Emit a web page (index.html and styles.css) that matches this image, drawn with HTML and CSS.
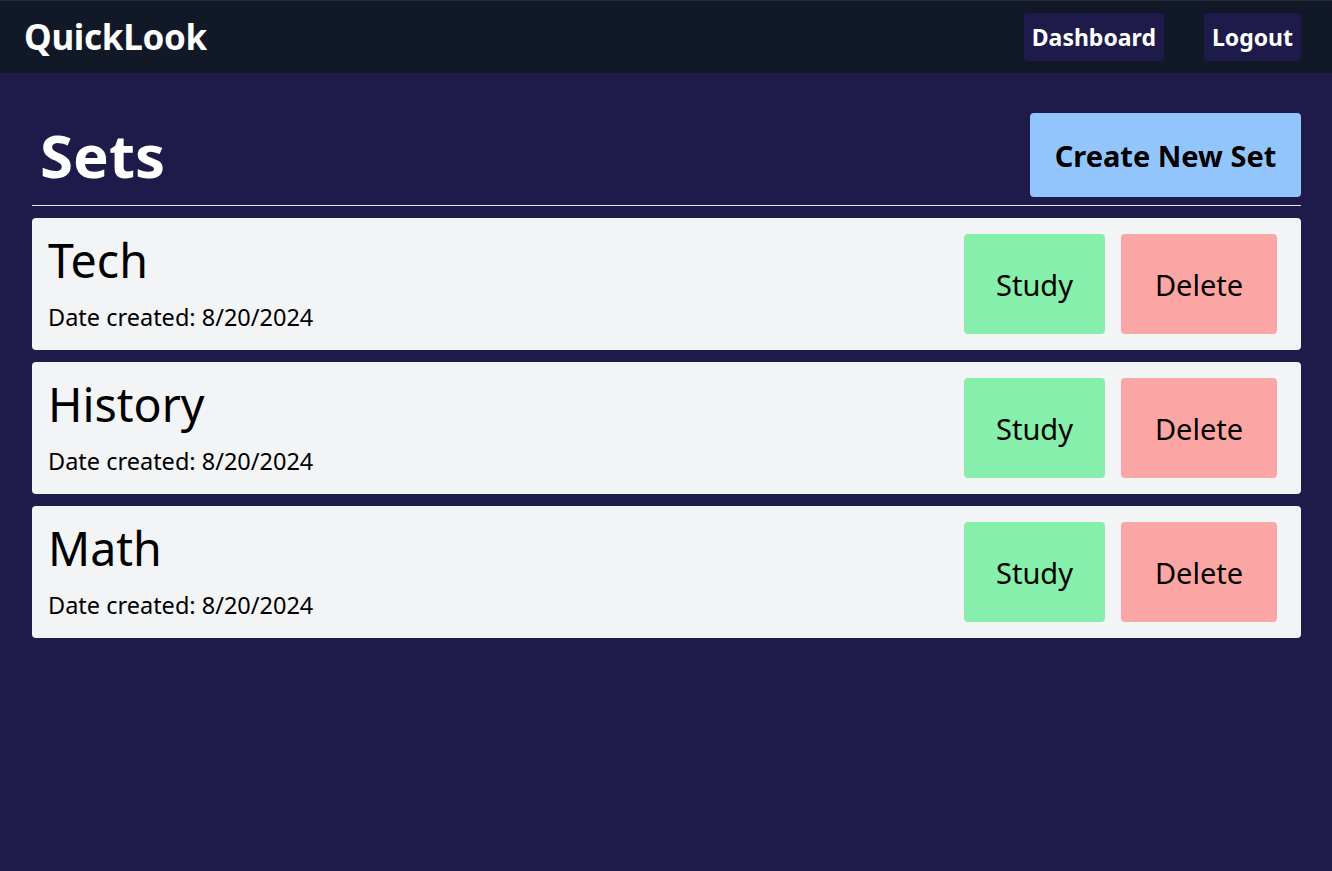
FILE: index.html
```html
<!DOCTYPE html>
<html lang="en">
<head>
<meta charset="utf-8">
<title>QuickLook</title>
<link rel="stylesheet" href="styles.css">
</head>
<body>
<nav class="navbar">
  <a class="logo" href="#">QuickLook</a>
  <div class="nav-links">
    <a class="nav-btn" href="#">Dashboard</a>
    <a class="nav-btn" href="#">Logout</a>
  </div>
</nav>
<main class="main">
  <header class="page-header">
    <h1 class="page-title">Sets</h1>
    <button class="create-btn">Create New Set</button>
  </header>
  <ul class="set-list">
    <li class="set-card">
      <div class="set-info">
        <h2 class="set-name">Tech</h2>
        <p class="set-date">Date created: 8/20/2024</p>
      </div>
      <div class="set-actions">
        <button class="btn btn-study">Study</button>
        <button class="btn btn-delete">Delete</button>
      </div>
    </li>
    <li class="set-card">
      <div class="set-info">
        <h2 class="set-name">History</h2>
        <p class="set-date">Date created: 8/20/2024</p>
      </div>
      <div class="set-actions">
        <button class="btn btn-study">Study</button>
        <button class="btn btn-delete">Delete</button>
      </div>
    </li>
    <li class="set-card">
      <div class="set-info">
        <h2 class="set-name">Math</h2>
        <p class="set-date">Date created: 8/20/2024</p>
      </div>
      <div class="set-actions">
        <button class="btn btn-study">Study</button>
        <button class="btn btn-delete">Delete</button>
      </div>
    </li>
  </ul>
</main>
</body>
</html>
```

FILE: styles.css
```css
* { box-sizing: border-box; }

html, body {
  margin: 0;
  padding: 0;
}

body {
  background: #1e1b4b;
  min-height: 100vh;
  font-family: "Noto Sans", "Open Sans", sans-serif;
  color: #000;
}

a { text-decoration: none; }

.navbar {
  display: flex;
  justify-content: space-between;
  align-items: center;
  height: 73px;
  border-top: 1px solid #2a2a2e;
  background: #111827;
  padding: 0 31px 0 24px;
}

.logo {
  color: #fff;
  font-weight: 700;
  font-size: 35px;
  line-height: 40px;
  letter-spacing: -0.3px;
}

.nav-links {
  display: flex;
  gap: 40px;
}

.nav-btn {
  display: flex;
  align-items: center;
  justify-content: center;
  height: 48px;
  padding: 0 8px;
  border-radius: 4px;
  background: #1e1b4b;
  color: #fff;
  font-weight: 700;
  font-size: 23px;
}

.main {
  margin: 40px 31px 0 32px;
}

.page-header {
  display: flex;
  justify-content: space-between;
  align-items: center;
  padding: 0 0 8px 8px;
  border-bottom: 1px solid #e5e7eb;
}

.page-title {
  margin: 0;
  color: #fff;
  font-size: 60px;
  line-height: 60px;
  font-weight: 700;
}

.create-btn {
  width: 271px;
  height: 84px;
  border: 0;
  border-radius: 4px;
  background: #93c5fd;
  color: #000;
  font-family: inherit;
  font-weight: 700;
  font-size: 29px;
}

.set-list {
  list-style: none;
  margin: 12px 0 0;
  padding: 0;
  display: flex;
  flex-direction: column;
  gap: 12px;
}

.set-card {
  display: flex;
  justify-content: space-between;
  align-items: center;
  background: #f3f4f6;
  border-radius: 4px;
  padding: 16px 24px 16px 16px;
}

.set-name {
  margin: 0;
  font-weight: 400;
  font-size: 46.5px;
  line-height: 48px;
}

.set-date {
  margin: 17px 0 0;
  font-size: 23.5px;
  line-height: 32px;
}

.set-actions {
  display: flex;
  gap: 16px;
}

.btn {
  height: 100px;
  border: 0;
  border-radius: 4px;
  color: #000;
  font-family: inherit;
  font-size: 29px;
}

.btn-study {
  width: 141px;
  background: #86efac;
}

.btn-delete {
  width: 156px;
  background: #fca5a5;
}
```
